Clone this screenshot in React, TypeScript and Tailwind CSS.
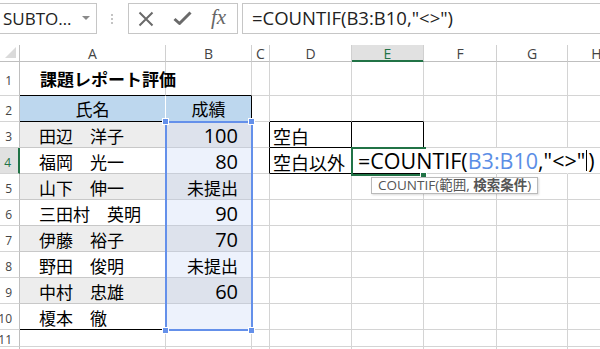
import React from 'react';

const sans = "font-['Open_Sans','Noto_Sans_CJK_JP',sans-serif]";
const jp = "font-['Noto_Sans_CJK_JP',sans-serif]";

const W = {
  A: 'w-[146px]',
  B: 'w-[86px]',
  C: 'w-[18px]',
  D: 'w-[82px]',
  E: 'w-[72px]',
  F: 'w-[73px]',
  G: 'w-[71px]',
  H: 'w-[58px]',
};

const ROWS = [
  { n: 3, name: '田辺　洋子', score: '100' },
  { n: 4, name: '福岡　光一', score: '80' },
  { n: 5, name: '山下　伸一', score: '未提出' },
  { n: 6, name: '三田村　英明', score: '90' },
  { n: 7, name: '伊藤　裕子', score: '70' },
  { n: 8, name: '野田　俊明', score: '未提出' },
  { n: 9, name: '中村　忠雄', score: '60' },
  { n: 10, name: '榎本　徹', score: '' },
];

function Cell({
  w,
  r = 'border-r-[#d4d4d4]',
  b = 'border-b-[#d4d4d4]',
  className = '',
  children,
}: {
  w: string;
  r?: string;
  b?: string;
  className?: string;
  children?: React.ReactNode;
}) {
  return (
    <div className={`${w} ${r} ${b} h-full shrink-0 border-r border-b flex items-center ${className}`}>{children}</div>
  );
}

function RowHead({ n, active = false }: { n: number; active?: boolean }) {
  return (
    <div
      className={`w-[20px] h-full shrink-0 border-b border-b-[#d4d4d4] flex items-center justify-end pr-[7px] pt-[4px] text-[12px] whitespace-nowrap ${sans} ${
        active ? 'bg-[#e1e1e1] text-[#217346] border-r-2 border-r-[#217346]' : 'text-[#444] border-r border-r-[#bfbfbf]'
      }`}
    >
      {n}
    </div>
  );
}

function ColHead({ w, label, active = false }: { w: string; label: string; active?: boolean }) {
  return (
    <div
      className={`${w} h-full shrink-0 border-r border-r-[#d0d0d0] border-b flex items-center justify-center text-[14px] ${sans} relative ${
        active ? 'bg-[#e1e1e1] text-[#217346] border-b-[#217346]' : 'text-[#444] border-b-[#bfbfbf]'
      }`}
    >
      {label}
      {active && <div className="absolute left-0 right-0 bottom-0 h-[1px] bg-[#217346]" />}
    </div>
  );
}

function Score({ v }: { v: string }) {
  if (!v) return null;
  const isNum = /^\d+$/.test(v);
  return <span className={isNum ? `${sans} text-[20px] leading-none` : `${jp} text-[17px] leading-none`}>{v}</span>;
}

export default function App() {
  return (
    <div className="relative w-[600px] h-[349px] overflow-hidden bg-white text-black">
      {/* Formula bar */}
      <div className="h-[45px] flex items-start pt-[3px]">
        <div className="w-[97px] h-[31px] shrink-0 border border-l-0 border-[#c6c6c6] flex items-center justify-between pl-[3px] pr-[6px]">
          <span className={`${sans} text-[17px] text-[#222] leading-none`}>SUBTO…</span>
          <svg width="8" height="5" viewBox="0 0 8 5">
            <polygon points="0,0 8,0 4,4" fill="#8a8a8a" />
          </svg>
        </div>
        <div className="w-[31px] h-[31px] shrink-0 flex flex-col items-center justify-center gap-[2px] pr-[1px]">
          <span className="w-[2px] h-[2px] bg-[#c4c4c4]" />
          <span className="w-[2px] h-[2px] bg-[#c4c4c4]" />
          <span className="w-[2px] h-[2px] bg-[#c4c4c4]" />
        </div>
        <div className="w-[110px] h-[31px] shrink-0 border border-[#c6c6c6] flex items-center pl-[9px] gap-[19px]">
          <svg width="16" height="16" viewBox="0 0 16 16">
            <path d="M1.5 1.5 L14.5 14.5 M14.5 1.5 L1.5 14.5" stroke="#6a6a6a" strokeWidth="2" fill="none" />
          </svg>
          <svg width="19" height="15" viewBox="0 0 19 15">
            <path d="M1.5 8 L6.5 12.5 L17.5 1.5" stroke="#6a6a6a" strokeWidth="3" fill="none" strokeLinejoin="round" />
          </svg>
          <span className="font-['Liberation_Serif',serif] italic text-[21px] leading-none text-[#666] -mt-[2px]">fx</span>
        </div>
        <div className="flex-1 h-[31px] ml-[4px] border border-r-0 border-[#c6c6c6] flex items-center pl-[9px]">
          <span className={`${sans} text-[18.5px] text-[#222] leading-none whitespace-nowrap`}>=COUNTIF(B3:B10,"&lt;&gt;")</span>
        </div>
      </div>

      {/* Column headers */}
      <div className="h-[17px] flex">
        <div className="w-[20px] h-full shrink-0 border-r border-r-[#bfbfbf] border-b border-b-[#bfbfbf] flex items-end justify-end pr-[3px] pb-[3px]">
          <svg width="11" height="11" viewBox="0 0 11 11">
            <polygon points="11,0 11,11 0,11" fill="#dadada" />
          </svg>
        </div>
        <ColHead w={W.A} label="A" />
        <ColHead w={W.B} label="B" />
        <ColHead w={W.C} label="C" />
        <ColHead w={W.D} label="D" />
        <ColHead w={W.E} label="E" active />
        <ColHead w={W.F} label="F" />
        <ColHead w={W.G} label="G" />
        <ColHead w={W.H} label="H" />
      </div>

      {/* Row 1 */}
      <div className="h-[34px] flex">
        <RowHead n={1} />
        <Cell w={W.A} b="border-b-black" className="pl-[20px]">
          <span className={`relative z-10 ${jp} text-[17px] font-bold leading-none whitespace-nowrap`}>課題レポート評価</span>
        </Cell>
        <Cell w={W.B} b="border-b-black" />
        <Cell w={W.C} />
        <Cell w={W.D} />
        <Cell w={W.E} />
        <Cell w={W.F} />
        <Cell w={W.G} />
        <Cell w={W.H} />
      </div>

      {/* Row 2 */}
      <div className="h-[26px] flex">
        <RowHead n={2} />
        <Cell w={W.A} r="border-r-white" b="border-b-black" className="bg-[#bdd7ee] justify-center">
          <span className={`${jp} text-[17px] leading-none`}>氏名</span>
        </Cell>
        <Cell w={W.B} r="border-r-black" b="border-b-black" className="bg-[#bdd7ee] justify-center">
          <span className={`${jp} text-[17px] leading-none`}>成績</span>
        </Cell>
        <Cell w={W.C} />
        <Cell w={W.D} b="border-b-black" />
        <Cell w={W.E} b="border-b-black" />
        <Cell w={W.F} />
        <Cell w={W.G} />
        <Cell w={W.H} />
      </div>

      {/* Rows 3-10 */}
      {ROWS.map((row) => {
        const odd = row.n % 2 === 1;
        const last = row.n === 10;
        return (
          <div key={row.n} className="h-[26px] flex">
            <RowHead n={row.n} active={row.n === 4} />
            <Cell
              w={W.A}
              r="border-r-black"
              b={last ? 'border-b-black' : 'border-b-[#c8c8c8]'}
              className={`${odd ? 'bg-[#ededed]' : 'bg-white'} pl-[19px] pt-[2px]`}
            >
              <span className={`${jp} text-[17px] leading-none whitespace-nowrap`}>{row.name}</span>
            </Cell>
            <Cell
              w={W.B}
              r="border-r-black"
              b={last ? 'border-b-black' : 'border-b-[#c9ced8]'}
              className={`${odd ? 'bg-[#dde2ec]' : 'bg-[#edf2fc]'} justify-end pr-[13px] pt-[2px]`}
            >
              <Score v={row.score} />
            </Cell>
            <Cell w={W.C} r={row.n === 3 || row.n === 4 ? 'border-r-black' : 'border-r-[#d4d4d4]'} />
            {row.n === 3 ? (
              <>
                <Cell w={W.D} r="border-r-black" b="border-b-black" className="pl-[3px] pt-[2px]">
                  <span className={`${jp} text-[18px] leading-none`}>空白</span>
                </Cell>
                <Cell w={W.E} r="border-r-black" b="border-b-black" />
              </>
            ) : row.n === 4 ? (
              <>
                <Cell w={W.D} r="border-r-black" b="border-b-black" className="pl-[3px] pt-[2px]">
                  <span className={`${jp} text-[18px] leading-none whitespace-nowrap`}>空白以外</span>
                </Cell>
                <Cell w={W.E} r="border-r-transparent" b="border-b-black">
                  <span className={`relative z-10 pl-[6px] ${sans} text-[21.5px] leading-none whitespace-nowrap flex items-center`}>
                    =COUNTIF(<span className="text-[#5b8ee6]">B3:B10</span>,"&lt;&gt;"
                    <span className="inline-block w-[1px] h-[21px] bg-black mx-[1px]" />)
                  </span>
                </Cell>
              </>
            ) : (
              <>
                <Cell w={W.D} />
                <Cell w={W.E} />
              </>
            )}
            <Cell w={W.F} r={row.n === 4 ? 'border-r-transparent' : 'border-r-[#d4d4d4]'} />
            <Cell w={W.G} r={row.n === 4 ? 'border-r-transparent' : 'border-r-[#d4d4d4]'} />
            <Cell w={W.H} />
          </div>
        );
      })}

      {/* Rows 11-12 */}
      {[11, 12].map((n) => (
        <div key={n} className="h-[17px] flex">
          <RowHead n={n} />
          <Cell w={W.A} />
          <Cell w={W.B} />
          <Cell w={W.C} />
          <Cell w={W.D} />
          <Cell w={W.E} />
          <Cell w={W.F} />
          <Cell w={W.G} />
          <Cell w={W.H} />
        </div>
      ))}

      {/* Range selection B3:B10 */}
      <div className="absolute left-[165px] top-[121px] w-[88px] h-[210px] border-2 border-[#6490ea]" />
      <div className="absolute left-[162px] top-[118px] w-[7px] h-[7px] bg-[#6490ea] border border-white" />
      <div className="absolute left-[248px] top-[118px] w-[7px] h-[7px] bg-[#6490ea] border border-white" />
      <div className="absolute left-[162px] top-[327px] w-[7px] h-[7px] bg-[#6490ea] border border-white" />
      <div className="absolute left-[248px] top-[327px] w-[7px] h-[7px] bg-[#6490ea] border border-white" />

      {/* Active cell E4 */}
      <div className="absolute left-[351px] top-[147px] w-[75px] h-[29px] border-2 border-r-0 border-[#217346]" />
      <div className="absolute left-[420px] top-[172px] w-[7px] h-[7px] bg-[#217346] border border-white" />

      {/* Function tooltip */}
      <div className="absolute left-[371px] top-[177px] h-[17px] px-[6px] border border-[#bababa] bg-white shadow-[1px_1px_2px_rgba(0,0,0,0.15)] flex items-center">
        <span className={`${sans} text-[13.5px] text-[#555] leading-none whitespace-nowrap`}>
          COUNTIF(範囲, <b className="font-bold">検索条件</b>)
        </span>
      </div>
    </div>
  );
}
